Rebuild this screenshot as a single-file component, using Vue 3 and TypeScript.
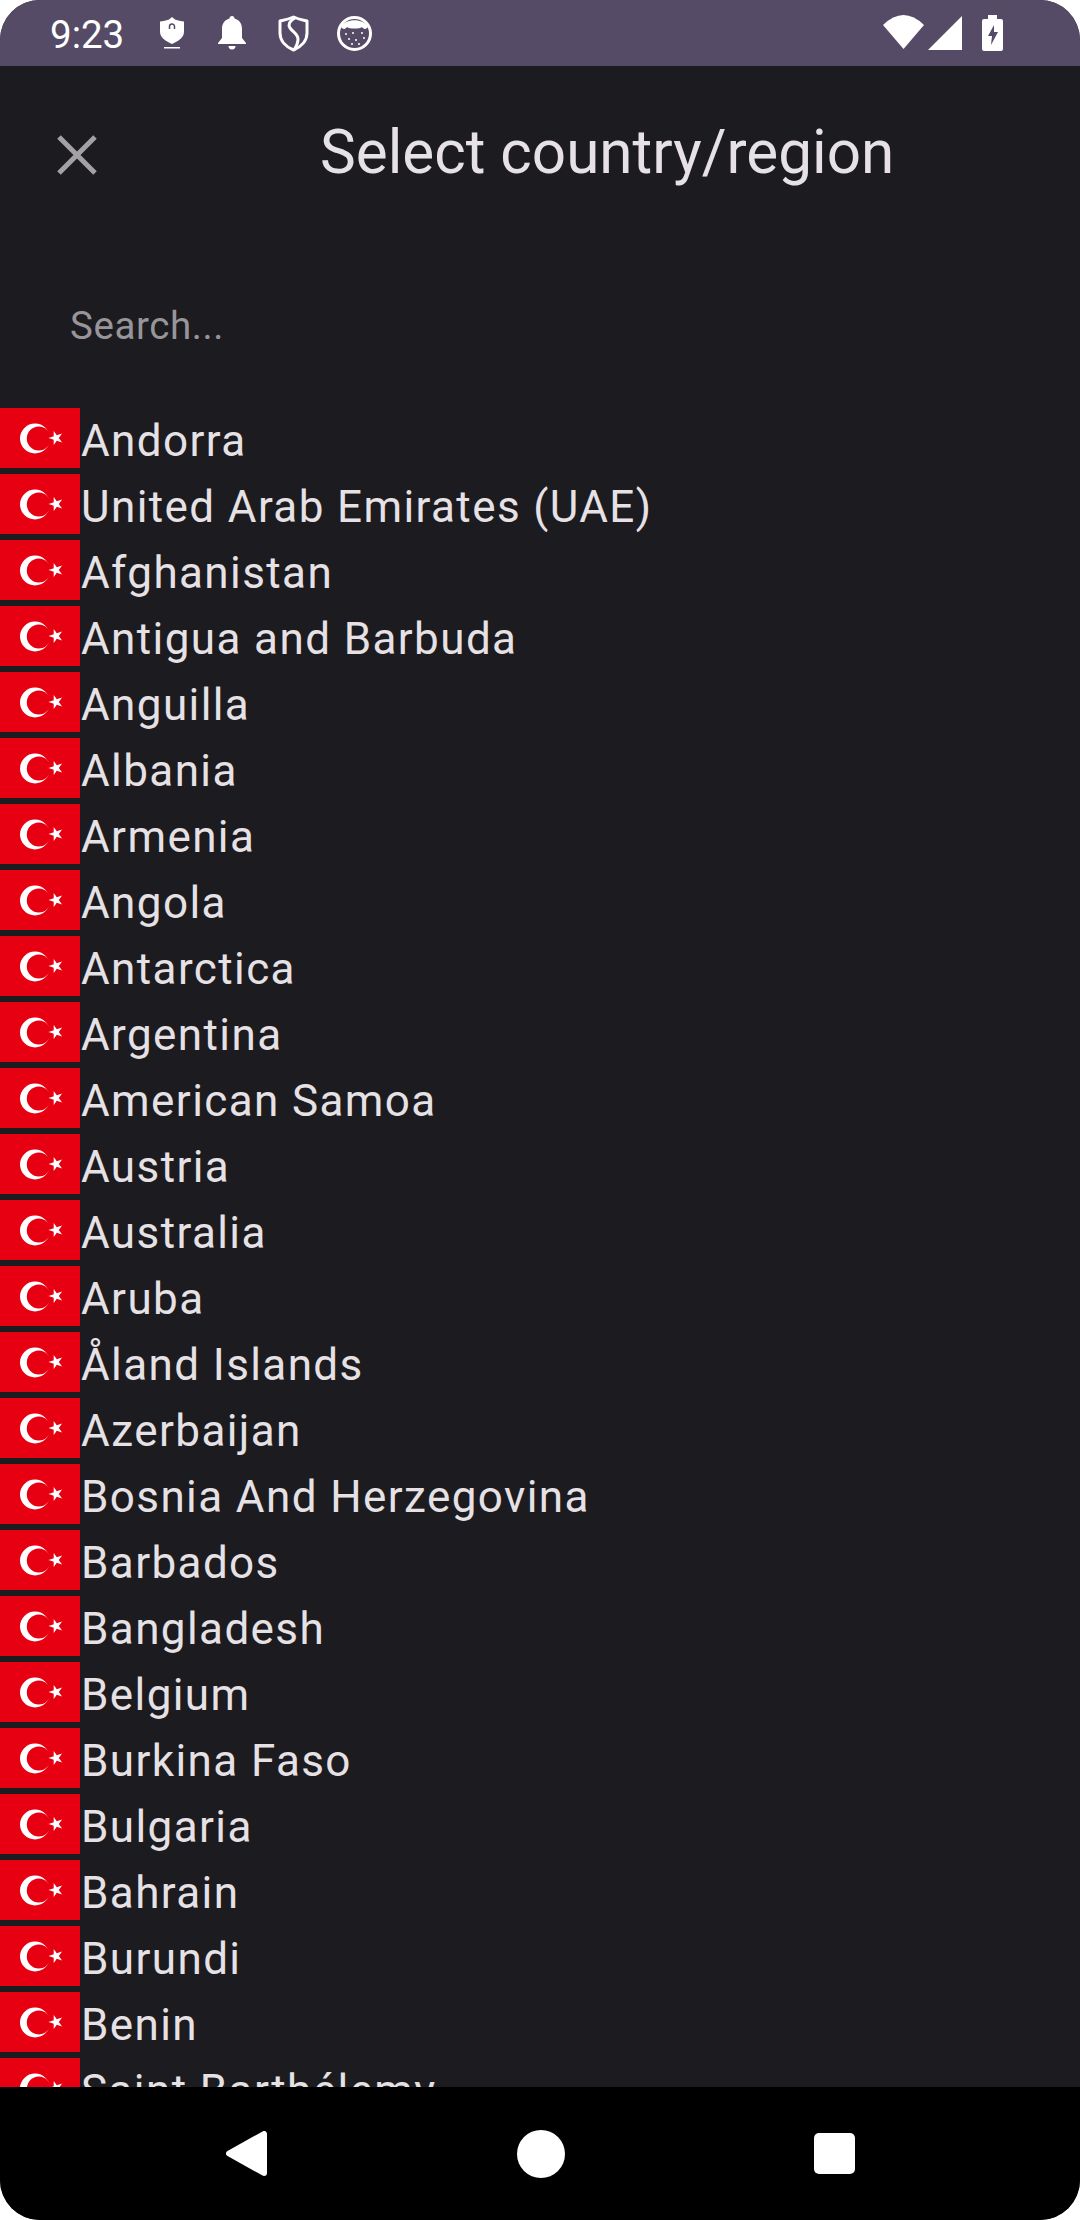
<script setup lang="ts">
const countries: string[] = [
  'Andorra',
  'United Arab Emirates (UAE)',
  'Afghanistan',
  'Antigua and Barbuda',
  'Anguilla',
  'Albania',
  'Armenia',
  'Angola',
  'Antarctica',
  'Argentina',
  'American Samoa',
  'Austria',
  'Australia',
  'Aruba',
  'Åland Islands',
  'Azerbaijan',
  'Bosnia And Herzegovina',
  'Barbados',
  'Bangladesh',
  'Belgium',
  'Burkina Faso',
  'Bulgaria',
  'Bahrain',
  'Burundi',
  'Benin',
  'Saint Barthélemy',
]
</script>

<template>
  <div class="screen">
    <header class="status">
      <div class="status-left">
        <span class="time">9:23</span>
        <svg class="ic-guard" width="26" height="32" viewBox="0 0 26 32">
          <path fill="#fff" d="M13 0l3 2.500c3 1 6 1.800 9 2V15c0 5-5 9-12 12C6 24 1 20 1 15V4.500c3-.2 6-1 9-2z" />
          <path fill="none" stroke="#554b66" stroke-width="1.500" d="M10.500 12V9.500a2.500 2.500 0 0 1 5 0V12" />
          <rect x="5" y="30" width="16" height="1.500" fill="#fff" />
        </svg>
        <svg class="ic-bell" width="28" height="34" viewBox="0 0 28 34">
          <path fill="#fff" d="M14 0c1.500 0 2.500 1 2.500 2.600C21.500 4 24 8 24 13v9l4 5v1H0v-1l4-5v-9c0-5 2.500-9 7.500-10.400C11.500 1 12.500 0 14 0z" />
          <path fill="#fff" d="M10.500 30h7a3.500 3.500 0 0 1-7 0z" />
        </svg>
        <svg class="ic-shield" width="31" height="37" viewBox="0 0 31 37">
          <path fill="none" stroke="#fff" stroke-width="3" stroke-linejoin="round" d="M15.500 2C20 4 25 5 29 6V18C29 26 23 32 15.500 35 8 32 2 26 2 18V6C6 5 11 4 15.500 2z" />
          <path fill="none" stroke="#fff" stroke-width="3" d="M17 3C11 6 10 10 12 13 15 17 20 19 20 24 20 28 18 32 16 35" />
        </svg>
        <svg class="ic-cookie" width="35" height="35" viewBox="0 0 35 35">
          <circle cx="17.500" cy="17.500" r="16" fill="none" stroke="#fff" stroke-width="3" />
          <path fill="#fff" d="M4 11C8 2 27 2 31 11 29 14 26 13 25 11 23 13 12 13 10 11 9 13 6 14 4 11z" />
          <g fill="#fff">
            <circle cx="9" cy="18" r="1" />
            <circle cx="16" cy="17" r="1" />
            <circle cx="25" cy="17" r="1" />
            <circle cx="12" cy="23" r="1" />
            <circle cx="19" cy="24" r="1" />
            <circle cx="27" cy="22" r="1" />
            <circle cx="15" cy="28" r="1" />
            <circle cx="22" cy="28" r="1" />
          </g>
        </svg>
      </div>
      <div class="status-right">
        <svg width="41" height="36" viewBox="0 0 41 36"><path fill="#fff" d="M0 10Q20.500 -10 41 10L20.500 34z" /></svg>
        <svg class="ic-signal" width="34" height="36" viewBox="0 0 34 36"><path fill="#fff" d="M34 1v34H0z" /></svg>
        <svg class="ic-batt" width="21" height="36" viewBox="0 0 21 36">
          <path fill="#fff" d="M6 0h9v4h4a2 2 0 0 1 2 2v28a2 2 0 0 1-2 2H2a2 2 0 0 1-2-2V6a2 2 0 0 1 2-2h4z" />
          <path fill="#554b66" d="M12 10L6 21h4L9 30l7-13h-4z" />
        </svg>
      </div>
    </header>

    <div class="toolbar">
      <svg class="close" width="40" height="40" viewBox="0 0 40 40">
        <path stroke="#a3a1a5" stroke-width="5" d="M2 2l36 36M38 2L2 38" />
      </svg>
      <h1 class="title">Select country/region</h1>
    </div>

    <div class="search">Search...</div>

    <ul class="list">
      <li v-for="name in countries" :key="name" class="row">
        <svg class="flag" width="80" height="60" viewBox="0 0 80 60">
          <rect width="80" height="60" fill="#e70011" />
          <circle cx="35" cy="30.500" r="15" fill="#fff" />
          <circle cx="38.800" cy="30.500" r="12" fill="#e70011" />
          <path fill="#fff" d="M48.500 30L62.070 25.600 53.700 37.100V22.900L62.070 34.400z" />
        </svg>
        <span class="name">{{ name }}</span>
      </li>
    </ul>

    <nav class="nav">
      <svg width="41" height="45" viewBox="0 0 41 45">
        <path fill="#fff" stroke="#fff" stroke-width="6" stroke-linejoin="round" d="M38 3v39L3 22.500z" />
      </svg>
      <span class="home"></span>
      <span class="recent"></span>
    </nav>
  </div>
</template>

<style>
html,
body {
  margin: 0;
  background: #fff;
}
</style>

<style scoped>
.screen {
  width: 1080px;
  height: 2220px;
  display: flex;
  flex-direction: column;
  overflow: hidden;
  border-radius: 40px;
  background: #1c1b1f;
  font-family: Roboto, sans-serif;
  color: #e6e1e5;
}
.status {
  height: 66px;
  flex: none;
  display: flex;
  align-items: center;
  justify-content: space-between;
  padding: 0 77px 0 50px;
  box-sizing: border-box;
  background: #554b66;
  color: #fff;
}
.status-left,
.status-right {
  display: flex;
  align-items: center;
}
.time {
  width: 76px;
  font-size: 38.5px;
  line-height: 44px;
  padding-top: 4px;
  white-space: nowrap;
}
.ic-guard {
  margin-left: 33px;
}
.ic-bell {
  margin-left: 33px;
}
.ic-shield {
  margin-left: 32px;
}
.ic-cookie {
  margin-left: 28px;
}
.ic-signal {
  margin-left: 4px;
}
.ic-batt {
  margin-left: 20px;
}
.toolbar {
  height: 174px;
  flex: none;
  display: flex;
  align-items: flex-start;
}
.close {
  margin: 69px 0 0 57px;
  flex: none;
}
.title {
  margin: 54px 0 0 223px;
  font-size: 60.2px;
  line-height: 66px;
  font-weight: 400;
  white-space: nowrap;
}
.search {
  height: 168px;
  flex: none;
  box-sizing: border-box;
  padding: 44px 0 0 70px;
  font-size: 38.5px;
  line-height: 84px;
  letter-spacing: 0.6px;
  color: #97959a;
}
.list {
  flex: 1;
  min-height: 0;
  overflow: hidden;
  margin: 0;
  padding: 0;
  list-style: none;
}
.row {
  height: 66px;
  display: flex;
  align-items: flex-start;
  gap: 1px;
}
.flag {
  flex: none;
}
.name {
  font-size: 44px;
  line-height: 66px;
  letter-spacing: 1.4px;
  white-space: nowrap;
}
.nav {
  height: 133px;
  flex: none;
  display: flex;
  align-items: center;
  gap: 249.5px;
  box-sizing: border-box;
  padding-left: 226px;
  background: #000;
}
.home {
  width: 48px;
  height: 48px;
  border-radius: 50%;
  background: #fff;
}
.recent {
  width: 41px;
  height: 41px;
  border-radius: 5px;
  background: #fff;
}
</style>
